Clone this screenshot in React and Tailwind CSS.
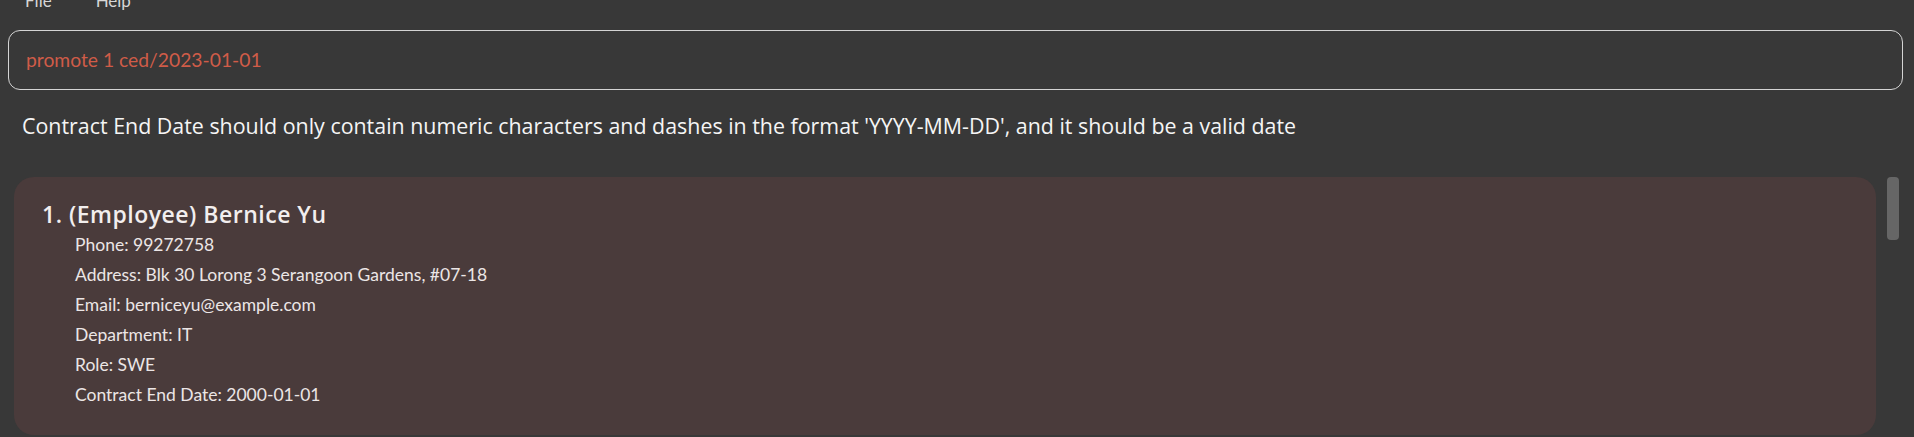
export default function App() {
  const details = [
    "Phone: 99272758",
    "Address: Blk 30 Lorong 3 Serangoon Gardens, #07-18",
    "Email: berniceyu@example.com",
    "Department: IT",
    "Role: SWE",
    "Contract End Date: 2000-01-01",
  ];
  return (
    <div
      className="w-full h-[437px] bg-[#383838] overflow-hidden flex flex-col"
      style={{ fontFamily: "Lato, 'Open Sans', sans-serif" }}
    >
      <div className="flex h-[20px] -mt-[9px] pl-[25px] gap-[44px] text-[17px] text-[#d6d6d6] leading-[20px]">
        <span>File</span>
        <span>Help</span>
      </div>
      <div className="pl-[8px] pr-[11px] mt-[19px]">
        <div className="h-[60px] border-[1.5px] border-[#d4d4d4] rounded-[12px] flex items-center px-[17px] text-[19.3px] text-[#d05c48]">
          promote 1 ced/2023-01-01
        </div>
      </div>
      <div
        className="pl-[22px] mt-[22px] h-[28px] leading-[28px] text-[21.4px] text-[#f5f5f5] whitespace-nowrap"
        style={{ fontFamily: "'Open Sans', sans-serif" }}
      >
        Contract End Date should only contain numeric characters and dashes in the format 'YYYY-MM-DD', and it should be a valid date
      </div>
      <div className="flex mt-[37px] pl-[14px] pr-[15px] gap-[11px]">
        <div className="flex-1 h-[258px] bg-[#4a3b3b] rounded-[20px] pl-[28px] pt-[22px]">
          <div
            className="text-[23px] font-semibold tracking-[0.5px] text-[#f2eeee] leading-[31px] h-[31px]"
            style={{ fontFamily: "'Open Sans', sans-serif" }}
          >
            1. (Employee) Bernice Yu
          </div>
          <div className="pl-[33px] flex flex-col">
            {details.map((d) => (
              <div key={d} className="text-[17.5px] text-[#ece6e6] leading-[30px] h-[30px]">
                {d}
              </div>
            ))}
          </div>
        </div>
        <div className="w-[12px] h-[63px] rounded-[4px] bg-[#666666]" />
      </div>
    </div>
  );
}
